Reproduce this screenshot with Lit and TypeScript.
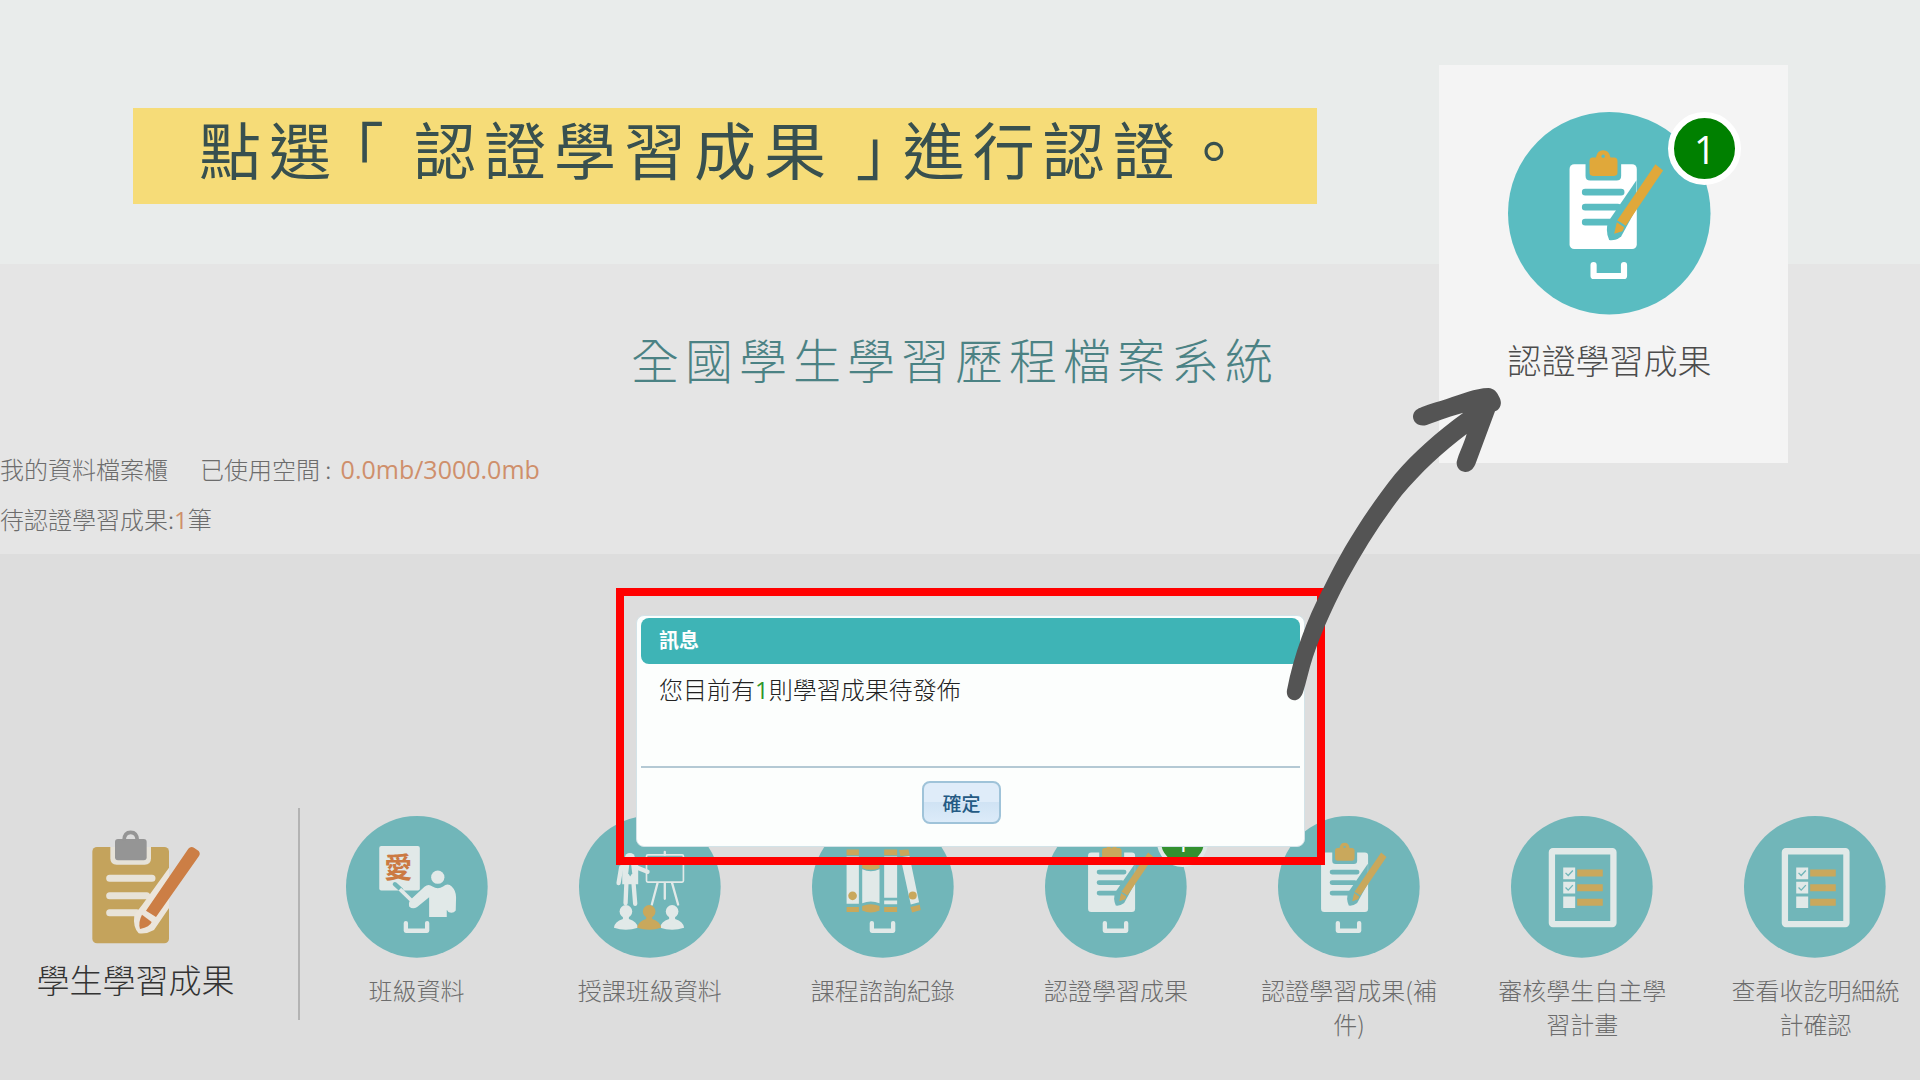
import { LitElement, html, svg, css, nothing } from "lit";
import { customElement, property } from "lit/decorators.js";

type IconName = "class" | "teaching" | "books" | "certify" | "checklist";

interface MenuItem {
  icon: IconName;
  label: string;
  count?: number;
}

const MENU: MenuItem[] = [
  { icon: "class", label: "班級資料" },
  { icon: "teaching", label: "授課班級資料" },
  { icon: "books", label: "課程諮詢紀錄" },
  { icon: "certify", label: "認證學習成果", count: 1 },
  { icon: "certify", label: "認證學習成果(補件)" },
  { icon: "checklist", label: "審核學生自主學習計畫" },
  { icon: "checklist", label: "查看收訖明細統計確認" },
];

const tray = svg`<path class="line" stroke-width="13" stroke-linecap="round" stroke-linejoin="round" d="M180 322 V345 H244 V322"/>`;

const listener = (x: number, cls: string) => svg`
  <g class=${cls}>
    <circle cx=${x} cy="287" r="19"/>
    <path d="M${x - 9} 300 H${x + 9} V310 Q${x + 34} 318 ${x + 36} 336 Q${x} 348 ${x - 36} 336 Q${x - 34} 318 ${x - 9} 310 Z"/>
  </g>`;

const ICONS: Record<IconName, unknown> = {
  class: svg`
    <rect class="paper" x="100" y="90" width="122" height="134" rx="6"/>
    <text class="glyph" x="157" y="187" text-anchor="middle">愛</text>
    <path class="cut" stroke-width="13" stroke-linecap="round" d="M147 205 L166 222"/>
    <path class="line" stroke-width="11" d="M162 220 L200 257"/>
    <circle class="paper" cx="276" cy="184" r="20"/>
    <path class="paper" d="M236 213 Q248 202 260 212 Q276 222 292 212 Q306 200 318 212 Q331 225 331 245 L330 284 Q322 295 308 289 L303 282 V304 H250 V244 L214 274 Q200 282 190 272 Q186 258 198 248 Z"/>
    ${tray}`,
  teaching: svg`
    <rect class="line" stroke-width="5" x="203" y="117" width="111" height="82" rx="4"/>
    <path class="line" stroke-width="7" stroke-linecap="round" d="M258 108 V117 M236 202 L219 266 M258 202 V249 M280 202 L298 266"/>
    <circle class="paper" cx="153" cy="126" r="15"/>
    <path class="paper" d="M126 146 Q153 138 178 148 V205 H130 V160 Z"/>
    <path class="line" stroke-width="13" stroke-linecap="round" stroke-linejoin="round" d="M127 154 L119 202 M143 190 L140 262 M163 190 L169 264 M174 155 L206 168"/>
    <path class="fill" d="M151 147 H157 L160 172 L154 182 L148 172 Z"/>
    ${listener(141, "paper")}${listener(280, "paper")}${listener(211, "accent")}`,
  books: svg`
    <path class="accent" d="M104 101 H141 V118 H104 Z M104 274 H141 V289 H104 Z M151 142 Q177 128 203 142 V156 Q177 168 151 156 Z M151 271 Q177 260 203 271 V284 Q177 296 151 284 Z M217 101 H256 V118 H217 Z M217 274 H256 V289 H217 Z M262 102 L290 101 L294 118 L266 120 Z M296 274 L324 267 L327 283 L301 290 Z"/>
    <path class="paper" d="M104 122 H141 V264 H104 Z M151 160 Q177 172 203 160 V262 Q177 252 151 262 Z M217 122 H256 V246 H217 Z M217 254 H256 V265 H217 Z M266 124 L293 120 L322 259 L297 266 Z"/>
    <circle class="accent" cx="122" cy="240" r="13"/>
    <circle class="accent" cx="303" cy="239" r="12"/>
    ${tray}`,
  certify: svg`
    <g transform="scale(0.7)">
      <rect class="paper" x="185" y="157" width="202" height="255" rx="14"/>
      <path class="fill" d="M233 150 H340 V192 Q340 206 326 206 H247 Q233 206 233 192 Z"/>
      <path class="accent" d="M254 137 H264 Q268 115 286 115 Q304 115 308 137 H319 Q329 137 329 148 V182 Q329 192 319 192 H255 Q245 192 245 182 V148 Q245 137 254 137 Z"/>
      <circle class="fill" cx="286" cy="133" r="5"/>
      <path class="cut" stroke-width="20" stroke-linecap="round" d="M232 241 H340 M232 286 H330 M232 331 H310"/>
      <path class="fill" d="M386 205 V290 L340 374 Q322 388 304 385 Q291 355 302 328 Z"/>
      <path class="accent" d="M443 157 L466 176 L354 342 L328 326 Z M327 331 L349 346 L344 358 L319 366 Z"/>
      <path class="cut" stroke-width="2" d="M327 328 Q341 331 352 344"/>
    </g>
    ${tray}`,
  checklist: svg`
    <rect class="line" stroke-width="19" x="123" y="106" width="185" height="219" rx="3"/>
    <path class="paper" d="M157 155 h36 v35 h-36 Z M157 198 h36 v35 h-36 Z M157 242 h36 v35 h-36 Z"/>
    <path class="accent" d="M199 161 h77 v21 h-77 Z M199 205 h77 v21 h-77 Z M199 249 h77 v21 h-77 Z"/>
    <path class="cut" stroke-width="4" d="M164 171 L172 179 L186 164 M164 215 L172 223 L186 208"/>`,
};

@customElement("round-icon")
class RoundIcon extends LitElement {
  @property() name: IconName = "class";
  @property({ type: Number }) count = 0;

  static styles = css`
    :host {
      --size: 142px;
      --teal: #71b6b9;
      --paper: #e1e9e8;
      --accent: #c9a85c;
      --glyph: #cb7a43;
      --badge: #33912f;
      display: block;
      position: relative;
      width: var(--size);
      height: var(--size);
    }
    .icon { display: block; width: 100%; height: 100%; }
    .fill { fill: var(--teal); }
    .paper { fill: var(--paper); }
    .accent { fill: var(--accent); }
    .line { fill: none; stroke: var(--paper); }
    .cut { fill: none; stroke: var(--teal); }
    .glyph { fill: var(--glyph); font: 700 84px "Noto Sans CJK TC", sans-serif; }
    .badge {
      position: absolute;
      top: 0;
      left: 79%;
      box-sizing: border-box;
      width: 36%;
      height: 36%;
      border: var(--ring, 4px) solid var(--paper);
      border-radius: 50%;
      display: grid;
      place-items: center;
      background: var(--badge);
      color: #fff;
      font-family: "Open Sans", sans-serif;
      font-size: var(--badge-size, 26px);
      font-weight: 500;
      line-height: 1;
    }
  `;

  render() {
    return html`
      <svg class="icon" viewBox="0 0 427 427" aria-hidden="true">
        <circle class="fill" cx="213" cy="213" r="213"></circle>
        ${ICONS[this.name]}
      </svg>
      ${this.count ? html`<span class="badge">${this.count}</span>` : nothing}
    `;
  }
}

@customElement("message-dialog")
class MessageDialog extends LitElement {
  static styles = css`
    :host { display: block; }
    .dialog {
      box-sizing: border-box;
      padding: 2px 4px 22px;
      border: 1px solid #d3e3e8;
      border-radius: 8px;
      background: #fcfefd;
      color: #222;
    }
    .title {
      margin: 0;
      padding: 0 18px 2px;
      border-radius: 8px;
      background: #3eb4b6;
      color: #fff;
      font-size: 20px;
      font-weight: 700;
      line-height: 44px;
    }
    .message {
      margin: 0;
      padding: 7px 18px 59px;
      border-bottom: 2px solid #b4c9d4;
      font-size: 24px;
      font-weight: 300;
      line-height: 36px;
    }
    .count {
      color: #2f962c;
      font-family: "Open Sans", sans-serif;
      font-weight: 500;
      line-height: 1;
    }
    .actions { display: flex; justify-content: center; padding: 13px 18px 0 0; }
    .ok {
      box-sizing: border-box;
      height: 43px;
      padding: 0 18px;
      border: 2px solid #9fc3d9;
      border-radius: 8px;
      background: linear-gradient(#dfecf9 0 50%, #d0e3f4 50%, #dcebf9);
      color: #245a84;
      font-family: inherit;
      font-size: 19px;
      font-weight: 500;
    }
  `;

  render() {
    return html`
      <div class="dialog" role="dialog" aria-labelledby="title">
        <h2 class="title" id="title">訊息</h2>
        <p class="message">您目前有<span class="count">1</span>則學習成果待發佈</p>
        <div class="actions"><button class="ok" type="button">確定</button></div>
      </div>
    `;
  }
}

@customElement("app-root")
class AppRoot extends LitElement {
  static styles = css`
    :host {
      display: flex;
      flex-direction: column;
      position: relative;
      min-height: 100vh;
      overflow: hidden;
      background: #ddd;
      color: #6c6c6c;
      font-family: "Noto Sans CJK TC", "Noto Sans", sans-serif;
      font-weight: 300;
    }
    .top { padding: 108px 603px 60px 133px; background: #e9eceb; }
    .banner {
      margin: 0;
      padding: 0 66px 16px;
      background: #f6dc78;
      color: #38504f;
      font-size: 62px;
      font-weight: 400;
      line-height: 80px;
      letter-spacing: 8px;
      white-space: nowrap;
    }
    .bracket { font-feature-settings: "halt"; }
    .open { padding-left: 14px; }
    .close { padding-right: 8px; }
    .summary { padding: 64px 0 10px; background: #e5e5e5; }
    .system {
      margin: 0 10px 56px 0;
      color: #4b8284;
      font-size: 48px;
      font-weight: 300;
      line-height: 60px;
      letter-spacing: 6px;
      text-align: center;
    }
    .info { display: flex; gap: 32px; margin: 0; font-size: 24px; line-height: 50px; }
    .value {
      color: #cf8f6b;
      font-family: "Open Sans", sans-serif;
      font-weight: 400;
      line-height: 1;
    }
    .usage { margin-left: 4px; font-size: 25px; }
    .work { display: flex; align-items: flex-start; padding: 254px 0 60px; }
    .group {
      box-sizing: border-box;
      flex: 0 0 300px;
      display: flex;
      flex-direction: column;
      align-items: center;
      gap: 12px;
      padding: 19px 27px 21px 0;
      border-right: 2px solid #b3b3b3;
      color: #333;
      font-size: 33px;
      line-height: 40px;
    }
    .clipboard { display: block; width: 135px; height: 120px; }
    .menu {
      flex: 1;
      display: grid;
      grid-template-columns: repeat(7, 1fr);
      margin: 8px -12px 0 0;
      padding: 0;
      list-style: none;
    }
    .link {
      display: flex;
      flex-direction: column;
      align-items: center;
      gap: 15px;
      color: inherit;
      font-size: 24px;
      line-height: 34px;
      text-align: center;
      text-decoration: none;
    }
    .label { max-width: 180px; line-break: anywhere; }
    .frame {
      position: absolute;
      top: 588px;
      left: calc(50% - 344px);
      box-sizing: border-box;
      width: 709px;
      padding: 19px 12px 10px 12px;
      border: 8px solid #f00;
    }
    .callout {
      position: absolute;
      top: 65px;
      right: 132px;
      box-sizing: border-box;
      width: 349px;
      display: flex;
      flex-direction: column;
      align-items: center;
      gap: 20px;
      padding: 47px 8px 79px 0;
      background: #f4f4f4;
      color: #4c4c4c;
      font-size: 34px;
      line-height: 49px;
    }
    .large {
      --size: 203px;
      --teal: #5abcc1;
      --paper: #fff;
      --accent: #e0a83a;
      --badge: #008000;
      --ring: 6px;
      --badge-size: 38px;
    }
    .arrow {
      position: absolute;
      top: 370px;
      right: 400px;
      width: 250px;
      height: 350px;
      pointer-events: none;
    }
  `;

  render() {
    return html`
      <header class="top">
        <h1 class="banner">點選<span class="bracket open">「</span> 認證學習成果 <span class="bracket close">」</span>進行認證。</h1>
      </header>

      <section class="summary">
        <h2 class="system">全國學生學習歷程檔案系統</h2>
        <p class="info">
          <span>我的資料檔案櫃</span>
          <span>已使用空間 : <span class="value usage">0.0mb/3000.0mb</span></span>
        </p>
        <p class="info"><span>待認證學習成果:<span class="value">1</span>筆</span></p>
      </section>

      <main class="work">
        <div class="group">
          <svg class="clipboard" viewBox="204 140 405 360" aria-hidden="true">
            <rect x="277" y="200" width="230" height="289" rx="14" fill="#c4a35c"></rect>
            <path fill="#e6e2d8" d="M331 196 H453 V234 Q453 253 434 253 H350 Q331 253 331 234 Z"></path>
            <path fill="#ddd" d="M329 190 H455 V200 H329 Z"></path>
            <rect x="345" y="176" width="95" height="64" rx="9" fill="#959595"></rect>
            <path fill="none" stroke="#959595" stroke-width="11" d="M372 180 Q373 156 392 156 Q411 156 412 180"></path>
            <path fill="none" stroke="#e8e3d8" stroke-width="21" stroke-linecap="round" d="M329 294 H456 M329 346 H440 M329 397 H410"></path>
            <path fill="#ebe5db" d="M507 262 V383 L462 449 Q440 462 416 459 Q398 440 403 404 L428 372 Z"></path>
            <path fill="#cc7e45" d="M565 205 Q573 196 583 203 L596 212 Q602 219 597 227 L468 410 L438 391 Z"></path>
            <path fill="#cc7e45" d="M426 403 L455 425 Q450 440 420 446 Q414 425 426 403 Z"></path>
          </svg>
          <span>學生學習成果</span>
        </div>
        <ul class="menu">
          ${MENU.map(
            (item) => html`
              <li>
                <a class="link" href="#">
                  <round-icon .name=${item.icon} .count=${item.count ?? 0}></round-icon>
                  <span class="label">${item.label}</span>
                </a>
              </li>
            `,
          )}
        </ul>
      </main>

      <div class="frame"><message-dialog></message-dialog></div>

      <aside class="callout">
        <round-icon class="large" .name=${"certify"} .count=${1}></round-icon>
        <span>認證學習成果</span>
      </aside>

      <svg class="arrow" viewBox="0 0 750 1050" aria-hidden="true">
        <path
          fill="#545454"
          d="M51 960 C71 855 112 745 160 655 C220 530 290 420 375 313 C430 248 500 186 580 128 C545 138 515 148 470 165 C445 172 428 155 429 138 C431 122 443 116 456 111 C480 101 505 95 530 87 C575 72 615 55 655 54 C673 56 681 66 686 78 C694 90 695 104 688 114 C684 120 680 122 675 124 L616 283 C609 299 598 307 585 306 C569 304 559 293 560 276 C566 250 582 222 590 192 C520 245 453 306 395 376 C335 453 280 540 232 628 C180 725 140 820 120 890 C112 920 105 950 98 970 C92 984 84 991 73 991 C58 990 48 978 51 960 Z"
        ></path>
      </svg>
    `;
  }
}
